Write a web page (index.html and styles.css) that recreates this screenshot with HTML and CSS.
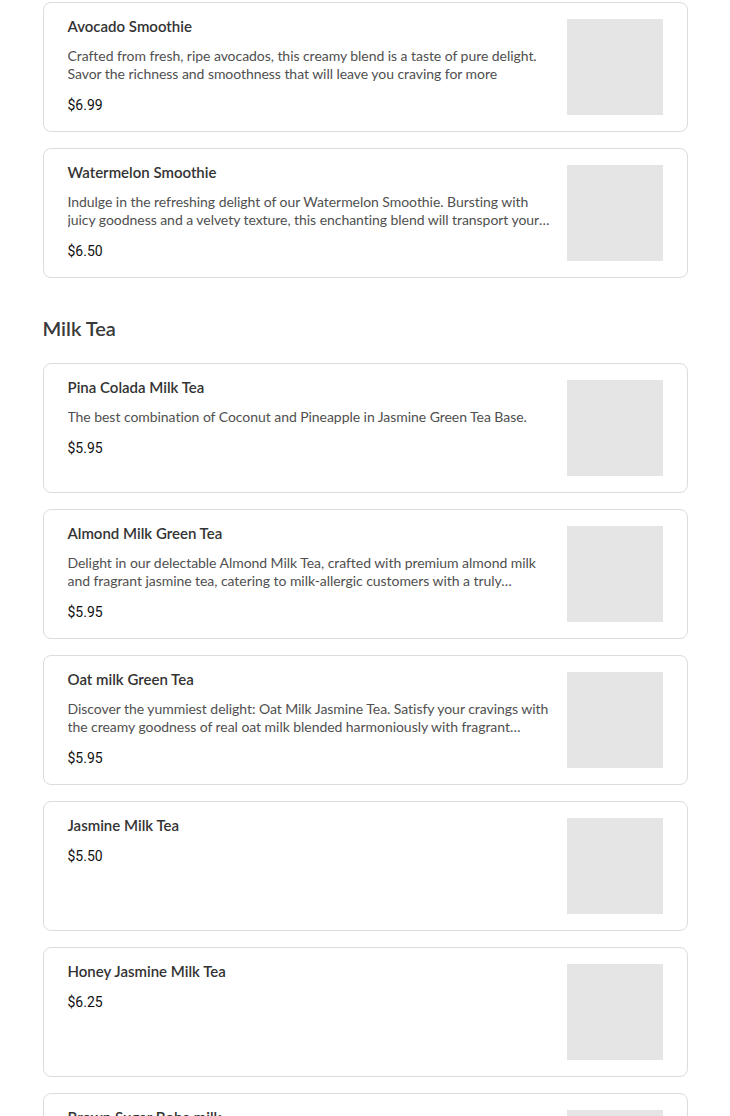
FILE: index.html
```html
<!DOCTYPE html>
<html lang="en">
<head>
<meta charset="utf-8">
<title>Menu</title>
<link rel="stylesheet" href="styles.css">
</head>
<body>
<main class="menu">
  <section class="section">
    <div class="list">
      <article class="card">
        <div class="info">
          <h3 class="name">Avocado Smoothie</h3>
          <p class="desc">Crafted from fresh, ripe avocados, this creamy blend is a taste of pure delight. Savor the richness and smoothness that will leave you craving for more</p>
          <div class="price">$6.99</div>
        </div>
        <div class="thumb"></div>
      </article>
      <article class="card">
        <div class="info">
          <h3 class="name">Watermelon Smoothie</h3>
          <p class="desc">Indulge in the refreshing delight of our Watermelon Smoothie. Bursting with juicy goodness and a velvety texture, this enchanting blend will transport your taste buds to a tropical paradise.</p>
          <div class="price">$6.50</div>
        </div>
        <div class="thumb"></div>
      </article>
    </div>
  </section>
  <section class="section">
    <h2 class="heading">Milk Tea</h2>
    <div class="list">
      <article class="card">
        <div class="info">
          <h3 class="name">Pina Colada Milk Tea</h3>
          <p class="desc">The best combination of Coconut and Pineapple in Jasmine Green Tea Base.</p>
          <div class="price">$5.95</div>
        </div>
        <div class="thumb"></div>
      </article>
      <article class="card">
        <div class="info">
          <h3 class="name">Almond Milk Green Tea</h3>
          <p class="desc">Delight in our delectable Almond Milk Tea, crafted with premium almond milk and fragrant jasmine tea, catering to milk-allergic customers with a truly delightful experience.</p>
          <div class="price">$5.95</div>
        </div>
        <div class="thumb"></div>
      </article>
      <article class="card">
        <div class="info">
          <h3 class="name">Oat milk Green Tea</h3>
          <p class="desc">Discover the yummiest delight: Oat Milk Jasmine Tea. Satisfy your cravings with the creamy goodness of real oat milk blended harmoniously with fragrant jasmine tea.</p>
          <div class="price">$5.95</div>
        </div>
        <div class="thumb"></div>
      </article>
      <article class="card">
        <div class="info">
          <h3 class="name">Jasmine Milk Tea</h3>
          <div class="price">$5.50</div>
        </div>
        <div class="thumb"></div>
      </article>
      <article class="card">
        <div class="info">
          <h3 class="name">Honey Jasmine Milk Tea</h3>
          <div class="price">$6.25</div>
        </div>
        <div class="thumb"></div>
      </article>
      <article class="card">
        <div class="info">
          <h3 class="name">Brown Sugar Boba milk</h3>
          <div class="price">$6.50</div>
        </div>
        <div class="thumb"></div>
      </article>
    </div>
  </section>
</main>
</body>
</html>
```

FILE: styles.css
```css
* { box-sizing: border-box; }
html, body { margin: 0; padding: 0; background: #fff; }
body { font-family: "Lato", "Noto Sans", sans-serif; color: #333; }
.menu {
  width: 645px;
  margin: 0 auto;
  padding-top: 2px;
}
.section + .section { margin-top: 38px; }
.heading {
  margin: 0 0 23px;
  font-size: 20px;
  line-height: 24px;
  font-weight: 600;
  color: #3a3a3a;
}
.list { display: flex; flex-direction: column; gap: 16px; }
.card {
  display: flex;
  gap: 10px;
  height: 130px;
  padding: 15px 24px 16px;
  border: 1px solid #dcdcdc;
  border-radius: 8px;
  background: #fff;
}
.info {
  flex: 1;
  min-width: 0;
  display: flex;
  flex-direction: column;
  gap: 12px;
}
.name {
  margin: -1px 0 0;
  font-size: 15px;
  line-height: 18px;
  font-weight: 600;
  color: #333;
}
.desc {
  margin: 0;
  font-size: 14px;
  line-height: 18px;
  letter-spacing: -0.05px;
  color: #505050;
  display: -webkit-box;
  -webkit-box-orient: vertical;
  -webkit-line-clamp: 2;
  overflow: hidden;
}
.price {
  margin-top: 1px;
  font-family: "Roboto", "Liberation Sans", sans-serif;
  font-size: 14px;
  line-height: 18px;
  color: #111;
}
.thumb {
  flex: 0 0 96px;
  width: 96px;
  height: 96px;
  margin-top: 1px;
  background: #e5e5e5;
}
```
